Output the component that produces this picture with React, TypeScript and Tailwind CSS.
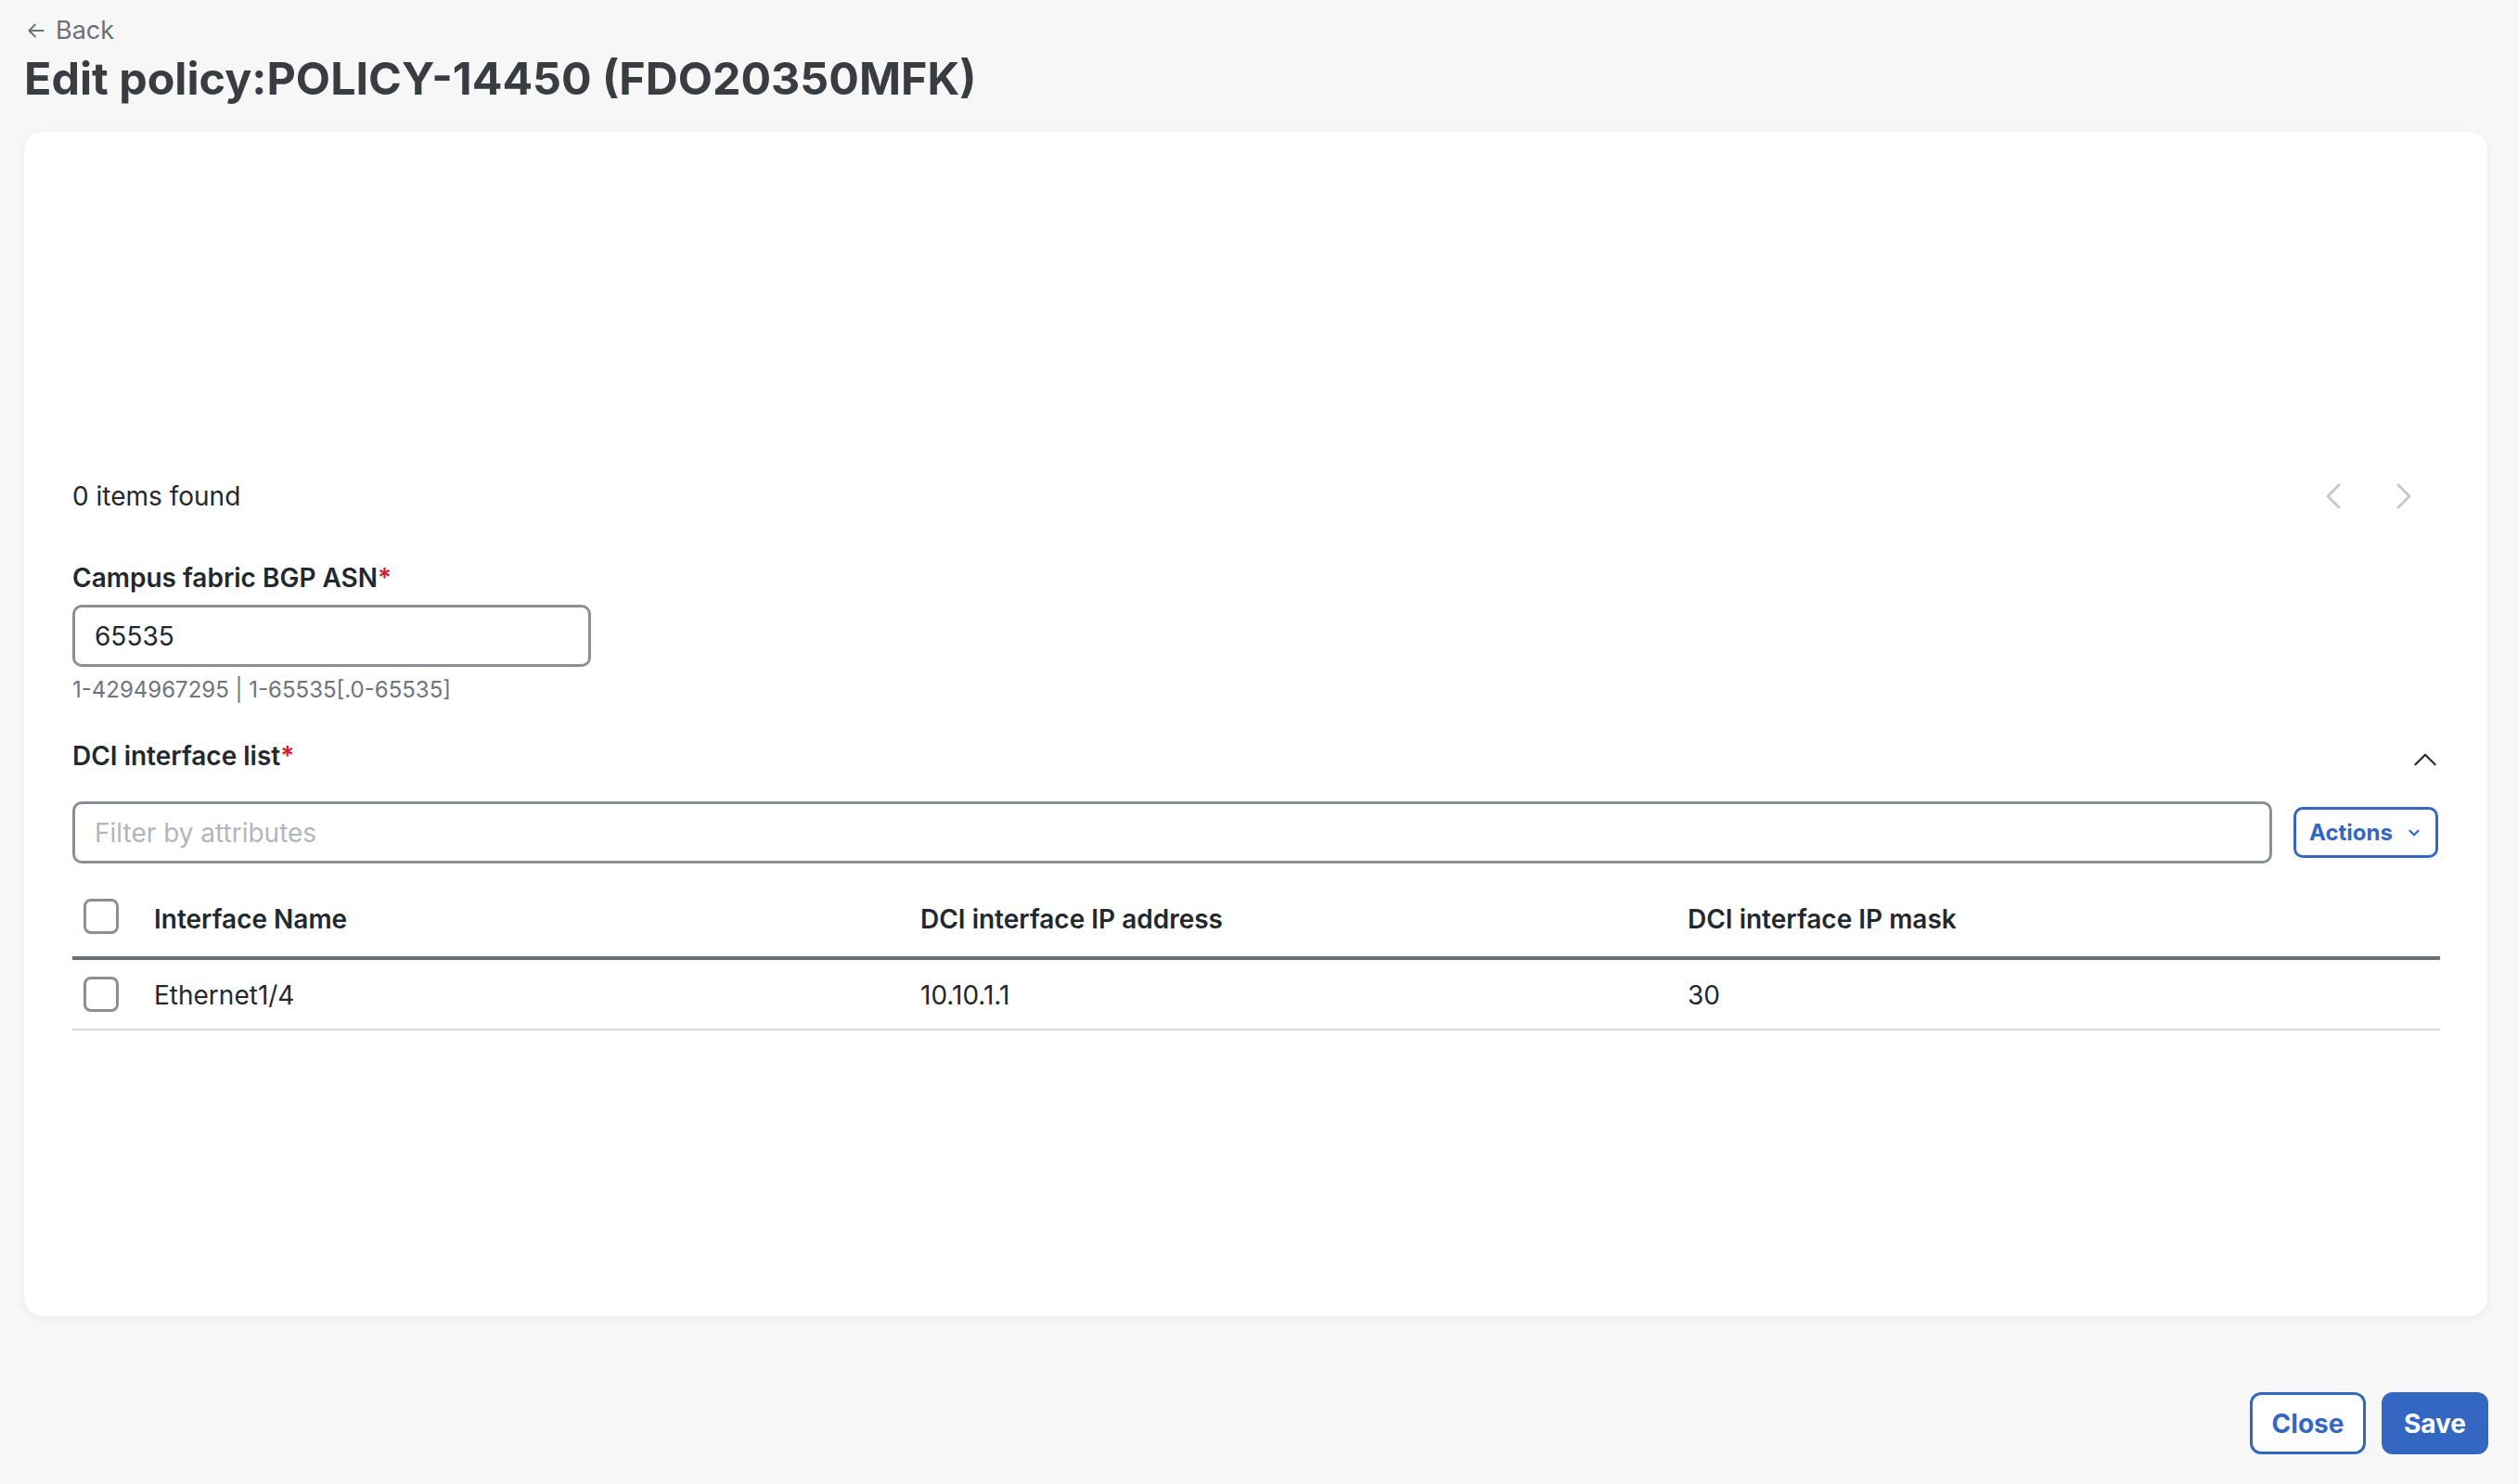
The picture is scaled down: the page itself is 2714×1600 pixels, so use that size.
import React from "react";

const Chev = ({ d, className }: { d: string; className: string }) => (
  <svg viewBox="0 0 24 24" fill="none" stroke="currentColor" strokeLinecap="round" strokeLinejoin="round" className={className}>
    <path d={d} />
  </svg>
);

const Checkbox = () => (
  <div className="w-[38px] h-[38px] rounded-[8px] border-[3.5px] border-[#8b9097] bg-white" />
);

export default function App() {
  return (
    <div className="min-h-[1600px] w-full bg-[#f7f7f7] text-[#23282e]" style={{ fontFamily: "Inter, 'Noto Sans', sans-serif" }}>
      <div className="pl-[26px] pt-[16px]">
        <div className="flex items-center gap-[8px] h-[34px] text-[27px] text-[#6b7178]">
          <svg viewBox="0 0 24 24" fill="none" stroke="currentColor" strokeWidth="1.8" strokeLinecap="round" strokeLinejoin="round" className="w-[26px] h-[26px]">
            <path d="M19 12H5M11 6l-6 6 6 6" />
          </svg>
          <span>Back</span>
        </div>
        <h1 className="mt-[4px] h-[62px] leading-[62px] text-[48.4px] font-bold text-[#393c40]">
          Edit policy:POLICY-14450 (FDO20350MFK)
        </h1>
      </div>

      <div className="mt-[26px] ml-[26px] mr-[33px] h-[1277px] bg-white rounded-[20px] shadow-[0_2px_10px_rgba(0,0,0,0.06)] pl-[52px] pr-[51px] pt-[373px]">
        <div className="flex items-center justify-between h-[40px]">
          <span className="text-[28px]">0 items found</span>
          <div className="flex items-center gap-[56px] mr-[29px] text-[#c6c9cd]">
            <svg viewBox="0 0 20 30" fill="none" stroke="currentColor" strokeWidth="3" strokeLinecap="round" strokeLinejoin="round" className="w-[20px] h-[30px]">
              <path d="M16 3L4 15l12 12" />
            </svg>
            <svg viewBox="0 0 20 30" fill="none" stroke="currentColor" strokeWidth="3" strokeLinecap="round" strokeLinejoin="round" className="w-[20px] h-[30px]">
              <path d="M4 3l12 12L4 27" />
            </svg>
          </div>
        </div>

        <div className="mt-[48px] text-[28px] font-semibold leading-[40px]">
          Campus fabric BGP ASN<span className="text-[#d0232f]">*</span>
        </div>
        <div className="mt-[9px] w-[559px] h-[67px] rounded-[10px] border-[3.5px] border-[#8b9097] flex items-center pl-[21px] text-[28px]">
          65535
        </div>
        <div className="mt-[9px] text-[24px] leading-[32px] text-[#6e747b]">
          1-4294967295 | 1-65535[.0-65535]
        </div>

        <div className="mt-[35px] flex items-center justify-between h-[40px]">
          <div className="text-[28px] font-semibold">
            DCI interface list<span className="text-[#d0232f]">*</span>
          </div>
          <Chev d="M4 16l8-8 8 8" className="w-[32px] h-[32px] stroke-[1.6] text-[#23282e] mt-[8px]" />
        </div>

        <div className="mt-[29px] flex items-center gap-[23px]">
          <div className="flex-1 h-[67px] rounded-[10px] border-[3.5px] border-[#8b9097] flex items-center pl-[21px] text-[28px] text-[#b2b6bb]">
            Filter by attributes
          </div>
          <div className="w-[156px] h-[55px] mr-[2px] rounded-[10px] border-[3.5px] border-[#3467c2] flex items-center justify-center gap-[14px] text-[24px] font-bold text-[#3467c2]">
            <span>Actions</span>
            <Chev d="M6 9l6 6 6-6" className="w-[18px] h-[18px] stroke-[3]" />
          </div>
        </div>

        <div className="mt-[9px]">
          <div className="grid grid-cols-[88px_826px_827px_1fr] items-center h-[95px] border-b-[4px] border-[#6b7178] text-[28px] font-semibold">
            <div className="pl-[12px] pt-[4px]"><Checkbox /></div>
            <div className="pt-[10px]">Interface Name</div>
            <div className="pt-[10px]">DCI interface IP address</div>
            <div className="pt-[10px]">DCI interface IP mask</div>
          </div>
          <div className="grid grid-cols-[88px_826px_827px_1fr] items-center h-[76px] border-b-[2px] border-[#d3d5d8] text-[28px]">
            <div className="pl-[12px]"><Checkbox /></div>
            <div className="pt-[2px]">Ethernet1/4</div>
            <div className="pt-[2px]">10.10.1.1</div>
            <div className="pt-[2px]">30</div>
          </div>
        </div>
      </div>

      <div className="mt-[82px] mr-[32px] flex justify-end gap-[17px]">
        <div className="w-[125px] h-[67px] rounded-[12px] border-[3.5px] border-[#3467c2] bg-white flex items-center justify-center text-[28px] font-bold text-[#3467c2]">
          Close
        </div>
        <div className="w-[115px] h-[67px] rounded-[12px] bg-[#3467c2] flex items-center justify-center text-[28px] font-bold text-white">
          Save
        </div>
      </div>
    </div>
  );
}
